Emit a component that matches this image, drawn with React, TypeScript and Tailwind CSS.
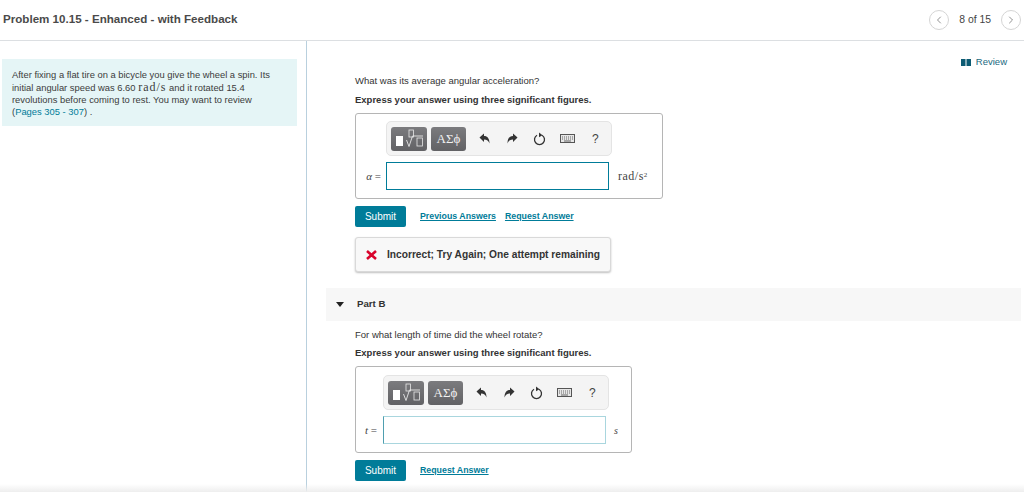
import type { ReactNode } from "react";
import { ChevronLeft, ChevronRight } from "lucide-react";

const sans = { fontFamily: '"Liberation Sans", Arial, sans-serif' };
const serif = { fontFamily: '"Liberation Serif", serif' };

function Toolbar() {
    return (
        <div className="flex h-[35px] w-[226px] items-center rounded-[5px] border border-[#e4e4e4] bg-[#f4f4f4] pl-[4px]">
            {/* Templates button */}
            <div className="flex h-[24px] w-[36px] items-center justify-center rounded-[3px] bg-gradient-to-b from-[#7b7b7e] to-[#626265]">
                <svg width="32" height="20" viewBox="0 0 32 20" fill="none">
                    <rect x="3" y="7" width="7" height="10" fill="#fff" />
                    <rect x="16" y="1" width="4.5" height="7" stroke="#e8e8e8" strokeWidth="0.8" />
                    <path d="M13.5 11l2.5 6.5 3.5-10.5h10.5" stroke="#e8e8e8" strokeWidth="0.9" />
                    <rect x="24" y="9" width="5.5" height="8" stroke="#e8e8e8" strokeWidth="0.8" />
                </svg>
            </div>
            {/* Symbols button */}
            <div
                className="ml-[4px] flex h-[24px] w-[35px] items-center justify-center rounded-[3px] bg-gradient-to-b from-[#7b7b7e] to-[#626265] text-[13px] text-[#f2f2f2]"
                style={serif}
            >
                ΑΣϕ
            </div>
            <svg className="ml-[13px]" width="11" height="11" viewBox="0 0 11 11">
                <path d="M0.5 4.5L5 0.5v2.5c3.5 0 5.5 2.5 5.5 7.5-1-2.8-2.5-4-5.5-4v2.5z" fill="#333" />
            </svg>
            <svg className="ml-[17px]" width="11" height="11" viewBox="0 0 11 11">
                <path d="M10.5 4.5L6 0.5v2.5c-3.5 0-5.5 2.5-5.5 7.5 1-2.8 2.5-4 5.5-4v2.5z" fill="#333" />
            </svg>
            <svg className="ml-[15px]" width="13" height="14" viewBox="0 0 13 14" fill="none">
                <path d="M4 3.2a5 5 0 1 0 5 0" stroke="#333" strokeWidth="1.3" />
                <path d="M6 0.5l3.5 2.7-3.5 2z" fill="#333" />
            </svg>
            <svg className="ml-[14px]" width="15" height="9" viewBox="0 0 15 9" fill="none">
                <rect x="0.5" y="0.5" width="14" height="8" fill="#e6e6e6" stroke="#555" />
                <path d="M2 3h11M2 5h11" stroke="#666" strokeWidth="1" strokeDasharray="1 1" />
                <path d="M4 7h7" stroke="#666" />
            </svg>
            <span className="ml-[17px] text-[12px] text-[#444]" style={sans}>
                ?
            </span>
        </div>
    );
}

function AnswerBox(props: {
    boxClass: string;
    toolbarPad: string;
    labelClass: string;
    label: string;
    inputClass: string;
    unitClass: string;
    unit: ReactNode;
}) {
    return (
        <div className={`${props.boxClass} rounded-[3px] border border-[#b5b5b5]`}>
            <div className={props.toolbarPad}>
                <Toolbar />
            </div>
            <div className="mt-[6px] flex items-center" style={serif}>
                <div className={`${props.labelClass} flex justify-end text-[11px] text-[#444]`}>
                    <i>{props.label}</i>&nbsp;=
                </div>
                <div className={`${props.inputClass} h-[28px] border`} />
                <div className={`${props.unitClass} text-[#444]`}>{props.unit}</div>
            </div>
        </div>
    );
}

function Question(props: { text: string; gap: string }) {
    return (
        <>
            <p className="text-[9.5px] leading-[12px] text-[#333]">{props.text}</p>
            <p className={`${props.gap} text-[9.5px] font-bold leading-[12px] text-[#333]`}>
                Express your answer using three significant figures.
            </p>
        </>
    );
}

function Submit() {
    return (
        <div className="flex h-[21px] w-[51px] items-center justify-center rounded-[2px] bg-[#007c99] text-[10px] text-white">
            Submit
        </div>
    );
}

function Link(props: { children: string; className?: string }) {
    return <span className={`text-[8.8px] font-bold text-[#007c99] underline ${props.className ?? ""}`}>{props.children}</span>;
}

export default function App() {
    return (
        <div className="relative h-[492px] w-[1024px] overflow-hidden bg-white" style={sans}>
            {/* Header */}
            <div className="flex h-[41px] items-center justify-between border-b border-[#dcdfe2] pl-[3px] pr-[3px]">
                <h1 className="mb-[2px] text-[11.6px] font-bold text-[#4a4a4a]">Problem 10.15 - Enhanced - with Feedback</h1>
                <div className="flex items-center">
                    <span className="flex h-[20px] w-[20px] items-center justify-center rounded-full border border-[#d5d5d5]">
                        <ChevronLeft size={12} strokeWidth={1.3} color="#555" />
                    </span>
                    <span className="mx-[10px] text-[10.4px] text-[#444]">8 of 15</span>
                    <span className="flex h-[20px] w-[20px] items-center justify-center rounded-full border border-[#d5d5d5]">
                        <ChevronRight size={12} strokeWidth={1.3} color="#555" />
                    </span>
                </div>
            </div>

            <div className="flex h-[451px]">
                {/* Left column */}
                <aside className="w-[307px] shrink-0 border-r border-[#b9d0de] pl-[2px] pt-[18px]">
                    <div className="h-[67px] w-[295px] bg-[#e5f5f6] pl-[10px] pt-[10px] text-[9.4px] leading-[12px] text-[#3c3c3c]">
                        After fixing a flat tire on a bicycle you give the wheel a spin. Its
                        <br />
                        initial angular speed was 6.60{" "}
                        <span className="text-[12px] leading-none tracking-[1px]" style={serif}>
                            rad/s
                        </span>{" "}
                        and it rotated 15.4
                        <br />
                        revolutions before coming to rest. You may want to review
                        <br />
                        (<span className="text-[#007c99]">Pages 305 - 307</span>) .
                    </div>
                </aside>

                {/* Right column */}
                <main className="min-w-0 flex-1">
                    <div className="flex justify-end pr-[17px] pt-[14px]">
                        <span className="flex items-center text-[9.5px] text-[#1a6a80]">
                            <svg className="mr-[5px]" width="10" height="7" viewBox="0 0 10 7">
                                <rect width="4.5" height="7" fill="#0d5b73" />
                                <rect x="5.5" width="4.5" height="7" fill="#0d5b73" />
                            </svg>
                            Review
                        </span>
                    </div>

                    <div className="pl-[48px] pt-[6px]">
                        <Question text="What was its average angular acceleration?" gap="mt-[7px]" />
                        <div className="mt-[7px]">
                            <AnswerBox
                                boxClass="h-[86px] w-[308px] pt-[7px]"
                                toolbarPad="pl-[30px]"
                                labelClass="w-[30px] pr-[5px]"
                                label="α"
                                inputClass="w-[223px] border-[#007c99]"
                                unitClass="ml-[9px] text-[12px] tracking-[0.5px]"
                                unit={
                                    <span>
                                        rad/s<sup className="text-[7px]">2</sup>
                                    </span>
                                }
                            />
                        </div>
                        <div className="mt-[7px] flex items-center">
                            <Submit />
                            <Link className="ml-[14px]">Previous Answers</Link>
                            <Link className="ml-[9px]">Request Answer</Link>
                        </div>
                        <div className="mt-[10px] flex h-[35px] w-[256px] items-center rounded-[3px] border border-[#d9d9d9] bg-[#f8f8f8] pl-[10px] shadow-[0_1px_2px_rgba(0,0,0,0.25)]">
                            <svg width="11" height="10" viewBox="0 0 11 10">
                                <path d="M1 1l9 8M10 1l-9 8" stroke="#d9032b" strokeWidth="2.6" />
                            </svg>
                            <span className="ml-[10px] text-[10.2px] font-bold text-[#333]">
                                Incorrect; Try Again; One attempt remaining
                            </span>
                        </div>
                    </div>

                    {/* Part B */}
                    <div className="ml-[19px] mt-[16px] flex h-[33px] w-[695px] items-center bg-[#f7f7f7]">
                        <span className="ml-[10px] h-0 w-0 border-x-[4px] border-t-[5px] border-x-transparent border-t-[#222]" />
                        <span className="ml-[13px] text-[9.7px] font-bold text-[#333]">Part B</span>
                    </div>

                    <div className="pl-[48px] pt-[8px]">
                        <Question text="For what length of time did the wheel rotate?" gap="mt-[6px]" />
                        <div className="mt-[7px]">
                            <AnswerBox
                                boxClass="h-[87px] w-[277px] pt-[8px]"
                                toolbarPad="pl-[27px]"
                                labelClass="w-[27px] pr-[6px]"
                                label="t"
                                inputClass="w-[223px] border-[#a9d6de] border-l-[#4f9fb0]"
                                unitClass="ml-[8px] text-[10px]"
                                unit={<i>s</i>}
                            />
                        </div>
                        <div className="mt-[7px] flex items-center">
                            <Submit />
                            <Link className="ml-[14px]">Request Answer</Link>
                        </div>
                    </div>
                </main>
            </div>

            {/* bottom shade */}
            <div className="absolute bottom-0 left-0 h-[8px] w-full bg-gradient-to-b from-transparent to-[#eeeeee]" />
        </div>
    );
}
